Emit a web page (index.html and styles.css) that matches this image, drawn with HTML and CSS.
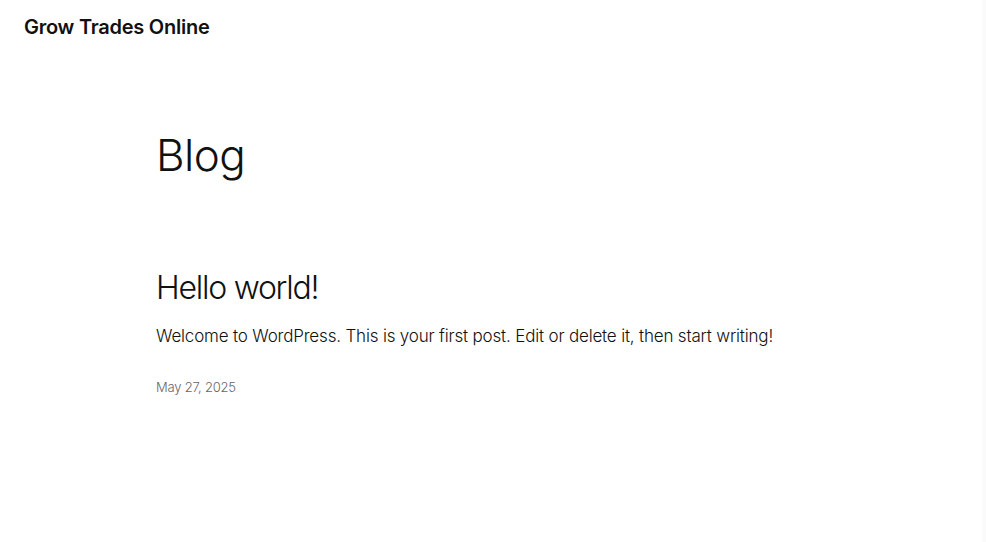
FILE: index.html
```html
<!DOCTYPE html>
<html lang="en">
<head>
<meta charset="utf-8">
<title>Blog – Grow Trades Online</title>
<link rel="stylesheet" href="styles.css">
</head>
<body>
<div class="page">
  <header class="site-header">
    <a class="site-title" href="#">Grow Trades Online</a>
  </header>
  <main class="main">
    <h1 class="page-title">Blog</h1>
    <article class="post">
      <h2 class="post-title">Hello world!</h2>
      <p class="post-excerpt">Welcome to WordPress. This is your first post. Edit or delete it, then start writing!</p>
      <time class="post-date">May 27, 2025</time>
    </article>
  </main>
</div>
</body>
</html>
```
FILE: styles.css
```css
html, body {
  margin: 0;
  padding: 0;
  height: 100%;
}
body {
  background: #fafafa;
  color: #111111;
  font-family: Inter, "Noto Sans", sans-serif;
  overflow: hidden;
}
.page {
  min-height: 100%;
  margin-right: 4px;
  background: #ffffff;
}
.site-header {
  padding: 14px 24px 0;
  height: 30px;
}
.site-title {
  font-size: 20px;
  font-weight: 600;
  letter-spacing: -0.25px;
  color: #111111;
  text-decoration: none;
  line-height: 26px;
}
.main {
  padding: 0 156px;
}
.page-title {
  margin: 89px 0 0;
  font-size: 44px;
  font-weight: 300;
  letter-spacing: -0.6px;
  line-height: 1;
}
.post {
  margin-top: 95px;
}
.post-title {
  margin: 0;
  font-size: 32px;
  font-weight: 300;
  letter-spacing: -1.25px;
  line-height: 1;
}
.post-excerpt {
  margin: 21px 0 0;
  font-size: 17px;
  font-weight: 300;
  letter-spacing: -0.18px;
  line-height: 1.3;
}
.post-date {
  display: block;
  margin-top: 32px;
  font-size: 13px;
  font-weight: 300;
  color: #666666;
  letter-spacing: -0.2px;
}
```
